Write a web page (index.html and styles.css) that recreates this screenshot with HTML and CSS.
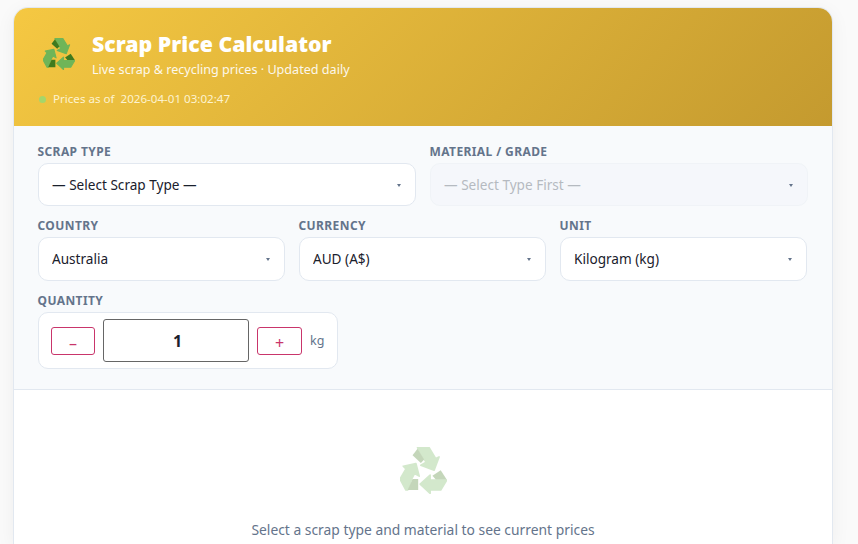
FILE: index.html
```html
<!DOCTYPE html>
<html>
    <head>
        <meta charset="utf-8">
        <title>Scrap Price Calculator</title>
        <link rel="stylesheet" href="styles.css">
    </head>
    <body>
    <div class="calc-card">
        <header class="calc-header">
            <div class="brand">
                <svg class="brand-icon" viewBox="87 50 142 142">
                    <path class="arrow-light" d="M140 52H175L195 85L205 80L190 120L150 105L166 96L148 66Z"/>
                    <path class="arrow-dark" d="M125 75L140 55L160 88L150 98Z"/>
                    <path class="arrow-light" d="M97 108L135 100L145 138L131 130L122 147L110 180H105L87 147L105 116Z"/>
                    <path class="arrow-dark" d="M110 180L125 147H142V180Z"/>
                    <path class="arrow-light" d="M148 162L178 135V150H228L210 180H178V190Z"/>
                    <path class="arrow-dark" d="M185 137L210 120L228 148H195Z"/>
                </svg>
                <div>
                    <h1 class="brand-title">Scrap Price Calculator</h1>
                    <p class="brand-sub">Live scrap &amp; recycling prices · Updated daily</p>
                </div>
            </div>
            <div class="status"><span class="status-dot"></span>Prices as of&nbsp; 2026-04-01 03:02:47</div>
        </header>

        <form class="calc-form" action="javascript:void(0);">
            <div class="form-row form-row-2">
                <div class="field">
                    <label for="scrap-type">Scrap Type</label>
                    <div class="select-wrap">
                        <select id="scrap-type"><option>— Select Scrap Type —</option></select>
                    </div>
                </div>
                <div class="field">
                    <label for="material">Material / Grade</label>
                    <div class="select-wrap">
                        <select id="material" disabled><option>— Select Type First —</option></select>
                    </div>
                </div>
            </div>
            <div class="form-row form-row-3">
                <div class="field">
                    <label for="country">Country</label>
                    <div class="select-wrap select-tall">
                        <select id="country"><option>Australia</option></select>
                    </div>
                </div>
                <div class="field">
                    <label for="currency">Currency</label>
                    <div class="select-wrap select-tall">
                        <select id="currency"><option>AUD (A$)</option></select>
                    </div>
                </div>
                <div class="field">
                    <label for="unit">Unit</label>
                    <div class="select-wrap select-tall">
                        <select id="unit"><option>Kilogram (kg)</option></select>
                    </div>
                </div>
            </div>
            <div class="field">
                <label for="qty">Quantity</label>
                <div class="qty-box">
                    <button class="qty-btn qty-minus" type="button">–</button>
                    <input id="qty" class="qty-input" type="text" value="1">
                    <button class="qty-btn qty-plus" type="button">+</button>
                    <span class="qty-unit">kg</span>
                </div>
            </div>
        </form>

        <div class="empty">
            <svg class="empty-icon" viewBox="87 50 142 142">
                <path class="arrow-light" d="M140 52H175L195 85L205 80L190 120L150 105L166 96L148 66Z"/>
                <path class="arrow-dark" d="M125 75L140 55L160 88L150 98Z"/>
                <path class="arrow-light" d="M97 108L135 100L145 138L131 130L122 147L110 180H105L87 147L105 116Z"/>
                <path class="arrow-dark" d="M110 180L125 147H142V180Z"/>
                <path class="arrow-light" d="M148 162L178 135V150H228L210 180H178V190Z"/>
                <path class="arrow-dark" d="M185 137L210 120L228 148H195Z"/>
            </svg>
            <p class="empty-text">Select a scrap type and material to see current prices</p>
        </div>
    </div>
    </body>
</html>
```

FILE: styles.css
```css
* {
    box-sizing: border-box;
}
body {
    margin: 0;
    height: 544px;
    overflow: hidden;
    padding: 8px 26px 0 14px;
    background-color: #fafafa;
    font-family: "Noto Sans", "Open Sans", sans-serif;
    color: #1e293b;
}
.calc-card {
    height: 536px;
    background-color: #fff;
    border-radius: 14px 14px 0 0;
    box-shadow: 0 0 0 1px #e2e8f0, 0 4px 20px rgba(0, 0, 0, 0.06);
}
.calc-header {
    height: 118px;
    padding: 21px 24px 0;
    border-radius: 14px 14px 0 0;
    background: linear-gradient(135deg, #f5c842, #c49a2f);
    color: #fff;
}
.brand {
    display: flex;
    align-items: center;
    gap: 17px;
}
.brand-icon {
    width: 32px;
    height: 32px;
    margin-left: 5px;
    flex: none;
}
.arrow-light {
    fill: #6fb558;
    stroke: #6fb558;
    stroke-width: 5;
    stroke-linejoin: round;
}
.arrow-dark {
    fill: #3f7a1e;
}
.brand-title {
    margin: 0;
    font-size: 21.3px;
    font-weight: 900;
    line-height: 29px;
}
.brand-sub {
    margin: 3px 0 0;
    font-size: 12.6px;
    line-height: 18px;
    opacity: 0.9;
}
.status {
    display: flex;
    align-items: center;
    margin-top: 12px;
    font-size: 11.6px;
    line-height: 16px;
    color: #fdf3d0;
}
.status-dot {
    width: 7px;
    height: 7px;
    margin: 0 7px 0 1px;
    border-radius: 50%;
    background-color: #a5d66a;
}
.calc-form {
    display: flex;
    flex-direction: column;
    gap: 11px;
    height: 264px;
    padding: 17px 24px 0;
    background-color: #f8fafc;
    border-bottom: 1px solid #e2e8f0;
}
.form-row {
    display: grid;
    gap: 14px;
}
.form-row-2 {
    grid-template-columns: 1fr 1fr;
}
.form-row-3 {
    grid-template-columns: 1fr 1fr 1fr;
    padding-right: 1px;
}
.field label {
    display: block;
    height: 20px;
    margin-left: -0.5px;
    font-size: 12px;
    font-weight: 700;
    line-height: 17px;
    letter-spacing: 0.4px;
    text-transform: uppercase;
    color: #64748b;
}
.select-wrap {
    position: relative;
    height: 43px;
}
.select-tall {
    height: 44px;
}
.select-wrap::after {
    content: "";
    position: absolute;
    top: 50%;
    right: 15px;
    margin-top: -1px;
    border-style: solid;
    border-width: 3px 2px 0;
    border-color: #64748b transparent transparent;
    pointer-events: none;
}
.select-wrap select {
    width: 100%;
    height: 100%;
    padding: 0 13px;
    appearance: none;
    font-family: inherit;
    font-size: 13.6px;
    color: #1a202c;
    background-color: #fff;
    border: 1px solid #e2e8f0;
    border-radius: 10px;
}
.select-tall select {
    padding-bottom: 1px;
}
.select-wrap select:disabled {
    color: #9a9fa8;
    background-color: #f4f7fb;
    border-color: #edf1f6;
}
.qty-box {
    display: inline-flex;
    align-items: center;
    gap: 8px;
    width: 300px;
    height: 57px;
    padding: 0 12px;
    background-color: #fff;
    border: 1px solid #e2e8f0;
    border-radius: 10px;
}
.qty-btn {
    height: 28px;
    padding: 5px 0 0;
    font-family: inherit;
    font-size: 16px;
    line-height: 20px;
    color: #c9356b;
    background-color: #fff;
    border: 1px solid #c9356b;
    border-radius: 3px;
}
.qty-minus {
    width: 44px;
}
.qty-plus {
    width: 45px;
}
.qty-input {
    width: 146px;
    height: 43px;
    padding: 0 0 0 3px;
    text-align: center;
    font-family: inherit;
    font-size: 16px;
    font-weight: 700;
    color: #1a202c;
    background-color: #fff;
    border: 1px solid #666;
    border-radius: 3px;
}
.qty-unit {
    font-size: 12.5px;
    color: #64748b;
}
.empty {
    display: flex;
    flex-direction: column;
    align-items: center;
    padding-top: 57px;
}
.empty-icon {
    width: 47px;
    height: 47px;
    opacity: 0.3;
}
.empty-text {
    margin: 26px 0 0;
    font-size: 13.85px;
    line-height: 19px;
    color: #64748b;
}
```
